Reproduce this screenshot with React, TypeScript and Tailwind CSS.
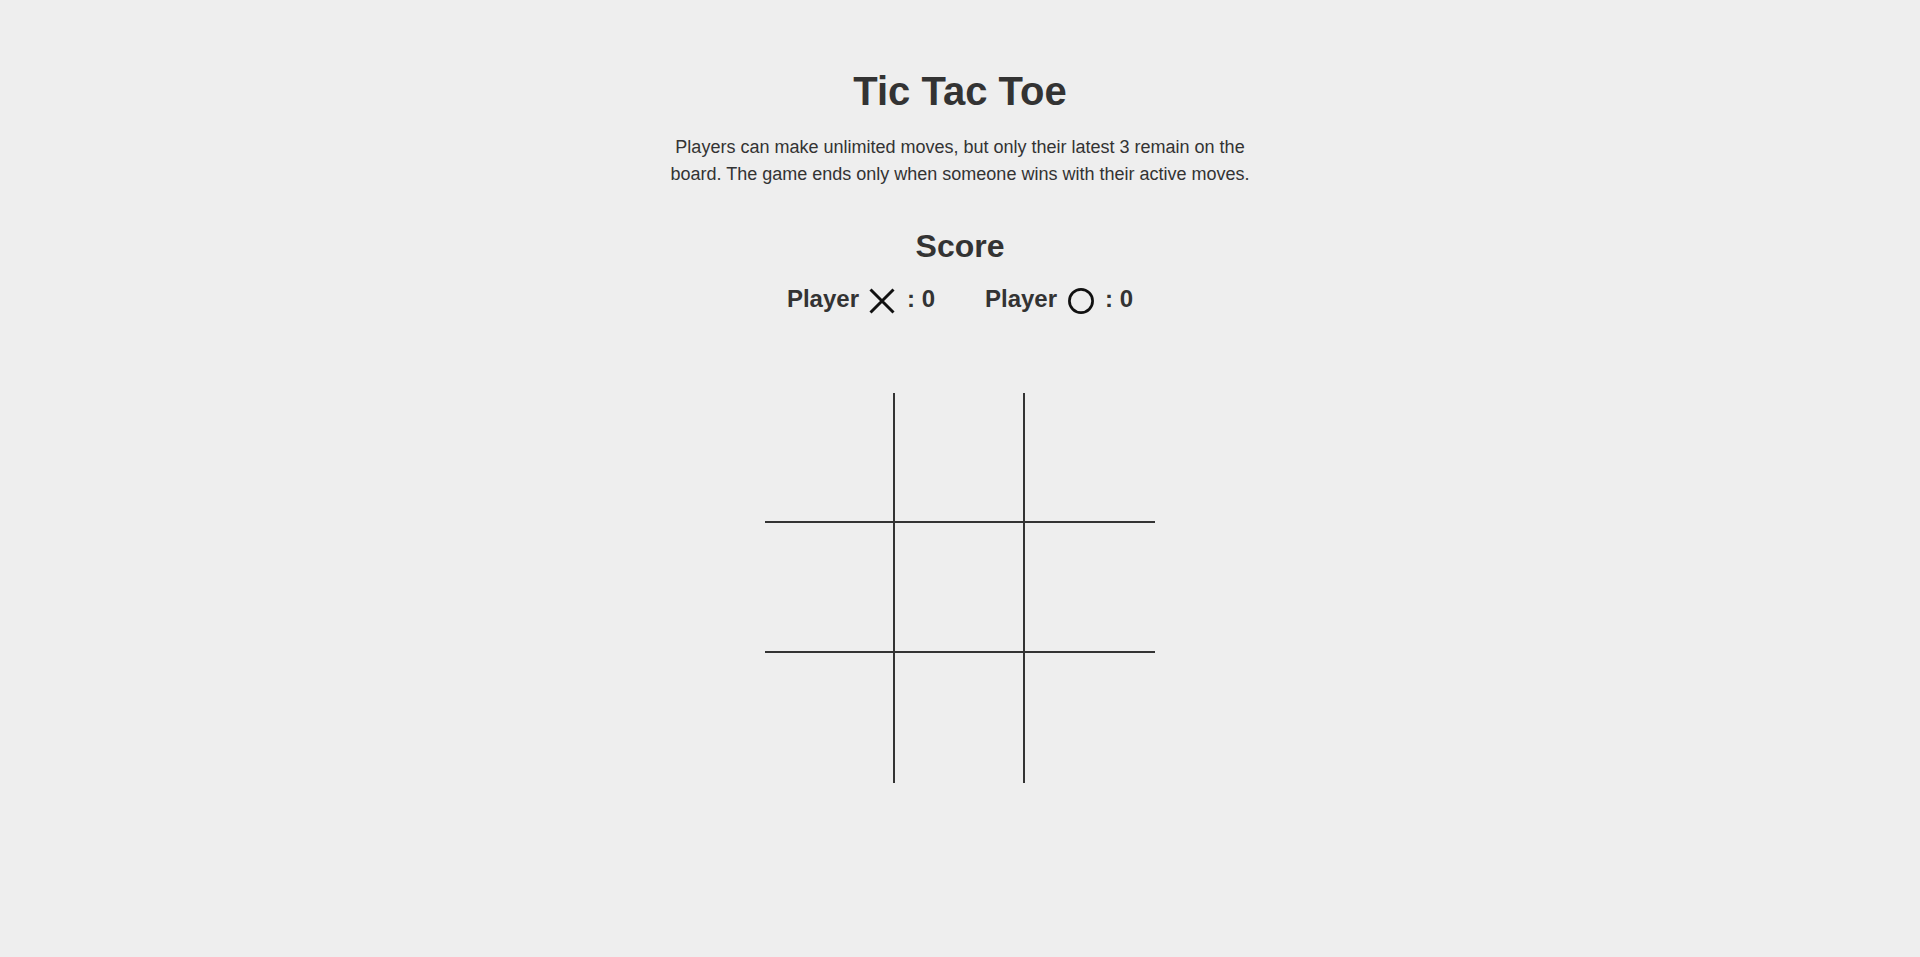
import React, { useState } from "react";

type Mark = "X" | "O" | null;

const XIcon: React.FC<{ size?: number }> = ({ size = 26 }) => (
    <svg width={size} height={size} viewBox="0 0 26 26" className="block">
        <path d="M1.5 1.5 L24.5 24.5 M24.5 1.5 L1.5 24.5" stroke="#111" strokeWidth="3" />
    </svg>
);

const OIcon: React.FC<{ size?: number }> = ({ size = 26 }) => (
    <svg width={size} height={size} viewBox="0 0 26 26" className="block">
        <circle cx="13" cy="13" r="11.6" fill="none" stroke="#111" strokeWidth="2.7" />
    </svg>
);

const App: React.FC = () => {
    const [board, setBoard] = useState<Mark[]>(Array(9).fill(null));
    const [score] = useState({ X: 0, O: 0 });

    const cellClass = (i: number) => {
        const row = Math.floor(i / 3);
        const col = i % 3;
        const r = col < 2 ? "border-r-2" : "";
        const b = row < 2 ? "border-b-2" : "";
        return `${r} ${b}`;
    };

    return (
        <div className="min-h-screen bg-[#eeeeee] text-[#333333] font-['Liberation_Sans',Arial,sans-serif] flex flex-col items-center">
            <h1 className="mt-[67px] text-[40px] leading-[48px] font-bold">Tic Tac Toe</h1>
            <p className="mt-[19px] max-w-[600px] text-center text-[18px] leading-[27px]">
                Players can make unlimited moves, but only their latest 3 remain on the board. The game ends
                only when someone wins with their active moves.
            </p>

            <h2 className="mt-[39px] text-[32px] leading-[38px] font-bold">Score</h2>
            <div className="mt-[20px] flex h-[28px] items-center text-[24px] leading-[28px] font-bold">
                <div className="flex items-center">
                    <span>Player</span>
                    <span className="ml-[10px] mt-[4px]">
                        <XIcon />
                    </span>
                    <span className="ml-[12px]">: {score.X}</span>
                </div>
                <div className="ml-[50px] flex items-center">
                    <span>Player</span>
                    <span className="ml-[11px] mt-[4px]">
                        <OIcon />
                    </span>
                    <span className="ml-[11px]">: {score.O}</span>
                </div>
            </div>

            <div className="mt-[80px] grid grid-cols-[repeat(3,130px)] grid-rows-[repeat(3,130px)]">
                {board.map((cell, i) => (
                    <button
                        key={i}
                        className={`${cellClass(i)} border-[#333333] flex items-center justify-center`}
                        onClick={() => {
                            if (cell) return;
                            const next = [...board];
                            next[i] = board.filter(Boolean).length % 2 === 0 ? "X" : "O";
                            setBoard(next);
                        }}
                    >
                        {cell === "X" && <XIcon size={70} />}
                        {cell === "O" && <OIcon size={70} />}
                    </button>
                ))}
            </div>
        </div>
    );
};

export default App;
